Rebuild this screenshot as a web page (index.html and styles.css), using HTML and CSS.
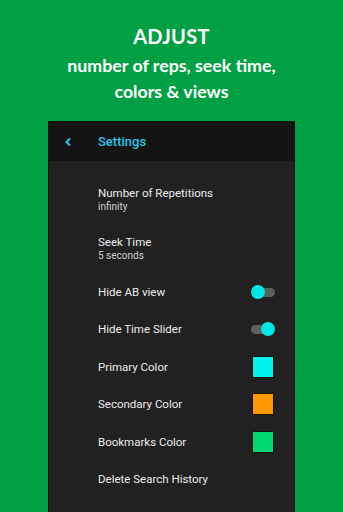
FILE: index.html
```html
<!DOCTYPE html>
<html lang="en">
<head>
  <meta charset="UTF-8" />
  <meta name="viewport" content="width=device-width, initial-scale=1.0" />
  <title>Settings</title>
  <link rel="stylesheet" href="styles.css">
</head>
<body>

  <!-- Cabeçalho -->
  <div class="cabecalho">
    <h1>ADJUST</h1>
    <p>number of reps, seek time,<br>colors &amp; views</p>
  </div>

  <div class="telefone">
    <div class="barra">
      <svg class="voltar" width="8" height="10" viewBox="0 0 8 10">
        <polyline points="6,1.5 2.5,5 6,8.5" fill="none" stroke="#29c4ea" stroke-width="2" />
      </svg>
      <span class="titulo">Settings</span>
    </div>

    <div class="lista">
      <div class="item duplo">
        <div class="nome">Number of Repetitions</div>
        <div class="valor">infinity</div>
      </div>
      <div class="item duplo">
        <div class="nome">Seek Time</div>
        <div class="valor">5 seconds</div>
      </div>
      <div class="item">
        <div class="nome">Hide AB view</div>
        <div class="chave"><span class="trilho"></span><span class="bolinha"></span></div>
      </div>
      <div class="item">
        <div class="nome">Hide Time Slider</div>
        <div class="chave ligada"><span class="trilho"></span><span class="bolinha"></span></div>
      </div>
      <div class="item">
        <div class="nome">Primary Color</div>
        <div class="cor ciano"></div>
      </div>
      <div class="item">
        <div class="nome">Secondary Color</div>
        <div class="cor laranja"></div>
      </div>
      <div class="item">
        <div class="nome">Bookmarks Color</div>
        <div class="cor verde"></div>
      </div>
      <div class="item">
        <div class="nome">Delete Search History</div>
      </div>
    </div>
  </div>

</body>
</html>
```

FILE: styles.css
```css
body {
  margin: 0;
  background-color: #02a044;
  font-family: Roboto, "Liberation Sans", sans-serif;
  height: 512px;
  overflow: hidden;
}

.cabecalho {
  text-align: center;
  color: #fff;
  font-family: Lato, "Open Sans", sans-serif;
  font-weight: bold;
  padding-top: 23px;
  height: 98px;
}

.cabecalho h1 {
  margin: 0;
  font-size: 20px;
  line-height: 26px;
  letter-spacing: 0.3px;
}

.cabecalho p {
  margin: 4px 0 0;
  font-size: 17.8px;
  line-height: 25.5px;
}

.telefone {
  margin: 0 48px;
  height: 391px;
  background-color: #212121;
  border: 1px solid #111;
  border-bottom: none;
}

.barra {
  display: flex;
  align-items: center;
  height: 39px;
  background-color: #141414;
}

.voltar {
  margin-left: 15px;
}

.titulo {
  margin-left: 26px;
  color: #29c4ea;
  font-size: 13px;
  font-weight: 500;
}

.lista {
  padding-top: 14px;
}

.item {
  display: flex;
  align-items: center;
  justify-content: space-between;
  height: 37.5px;
  padding-left: 49px;
  padding-right: 19px;
}

.item.duplo {
  flex-direction: column;
  align-items: flex-start;
  justify-content: center;
  height: 49px;
}

.nome {
  color: #ececec;
  font-size: 11.5px;
  line-height: 14px;
}

.valor {
  color: #cfcfcf;
  font-size: 10px;
  line-height: 14px;
}

.chave {
  position: relative;
  width: 24px;
  height: 14px;
}

.trilho {
  position: absolute;
  left: 1px;
  right: 0;
  top: 3px;
  height: 9px;
  border-radius: 5px;
  background-color: #5e5e5e;
}

.bolinha {
  position: absolute;
  left: 0;
  top: 0;
  width: 14px;
  height: 14px;
  border-radius: 50%;
  background-color: #00e6e6;
}

.chave.ligada .trilho {
  left: 0;
  right: 3px;
}

.chave.ligada .bolinha {
  left: 10px;
}

.cor {
  width: 20px;
  height: 20px;
  border: 1px solid #151515;
  margin-right: 1px;
}

.ciano {
  background-color: #00f0ea;
}

.laranja {
  background-color: #ff9800;
}

.verde {
  background-color: #00d873;
}
```
